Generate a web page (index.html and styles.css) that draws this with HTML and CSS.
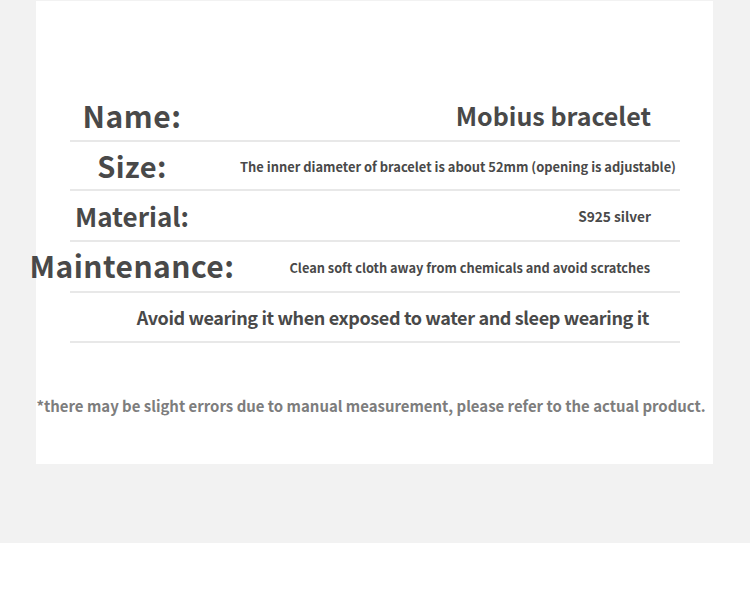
FILE: index.html
```html
<!DOCTYPE html>
<html lang="en">
<head>
<meta charset="utf-8">
<title>Mobius bracelet</title>
<link rel="stylesheet" href="styles.css">
</head>
<body>
<div class="stage">
  <div class="card">
    <div class="specs">
      <div class="row row-first">
        <div class="label"><span class="l-name">Name:</span></div>
        <div class="value v-name">Mobius bracelet</div>
      </div>
      <div class="row row-short">
        <div class="label"><span class="l-size">Size:</span></div>
        <div class="value v-size">The inner diameter of bracelet is about 52mm (opening is adjustable)</div>
      </div>
      <div class="row">
        <div class="label"><span class="l-material">Material:</span></div>
        <div class="value v-silver">S925 silver</div>
      </div>
      <div class="row">
        <div class="label"><span class="l-maint">Maintenance:</span></div>
        <div class="value v-small">Clean soft cloth away from chemicals and avoid scratches</div>
      </div>
      <div class="row row-last">
        <div class="value v-avoid">Avoid wearing it when exposed to water and sleep wearing it</div>
      </div>
    </div>
    <p class="note">*there may be slight errors due to manual measurement, please refer to the actual product.</p>
  </div>
</div>
<div class="bottom"></div>
</body>
</html>
```
FILE: styles.css
```css
html, body {
  margin: 0;
  padding: 0;
  background: #ffffff;
}
body {
  font-family: "Noto Sans CJK SC", "Noto Sans", sans-serif;
  color: #494949;
}
.stage {
  background: #f2f2f2;
  height: 543px;
  padding: 1px 37px 0 36px;
  box-sizing: border-box;
}
.card {
  background: #ffffff;
  height: 463px;
  padding-top: 89px;
  box-sizing: border-box;
}
.specs {
  margin: 0 33px 0 34px;
}
.row {
  display: flex;
  align-items: center;
  height: 51px;
  border-bottom: 2px solid #e8e8e8;
  box-sizing: border-box;
}
.row-first {
  height: 52px;
}
.row-short {
  height: 49px;
}
.row-last {
  height: 50px;
  padding-bottom: 1px;
}
.label {
  width: 124px;
  flex: none;
  display: flex;
  justify-content: center;
  white-space: nowrap;
  font-weight: 700;
  line-height: 1;
}
.l-name { font-size: 30px; letter-spacing: 0.5px; }
.l-size { font-size: 29px; letter-spacing: 0.4px; }
.l-material { font-size: 26px; }
.l-maint { font-size: 30px; letter-spacing: 0.45px; margin-bottom: 3px; }
.value {
  flex: 1;
  text-align: right;
  white-space: nowrap;
  font-weight: 700;
  padding-right: 29px;
  line-height: 1;
}
.v-name { font-size: 25px; }
.v-size {
  font-size: 12.9px;
  padding-right: 4px;
  padding-top: 4px;
}
.v-silver { font-size: 13.7px; padding-top: 3px; }
.v-small { font-size: 12.8px; padding-right: 30px; padding-top: 3px; }
.v-avoid {
  font-size: 18px;
  font-weight: 700;
  letter-spacing: -0.37px;
  padding-right: 31px;
}
.note {
  margin: 52px 7px 0 0;
  text-align: center;
  font-size: 14.95px;
  font-weight: 700;
  color: #7d7d7d;
  white-space: nowrap;
}
.bottom {
  height: 73px;
  background: #ffffff;
}
```
